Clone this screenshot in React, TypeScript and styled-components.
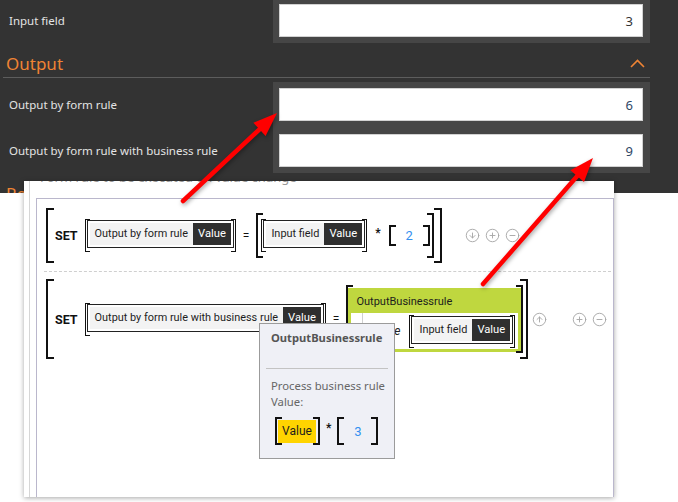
import React from 'react';
import styled, { createGlobalStyle, css } from 'styled-components';
import { CircleArrowDown, CircleArrowUp, CirclePlus, CircleMinus } from 'lucide-react';

const GlobalStyle = createGlobalStyle`
  * { box-sizing: border-box; }
  html, body { margin: 0; padding: 0; background: #ffffff; }
  body { font-family: "Noto Sans", "Open Sans", sans-serif; }
`;

const Page = styled.div`
  position: relative;
  width: 678px;
  height: 502px;
  overflow: hidden;
  background: #ffffff;
`;

/* ---------- dark form (background screenshot) ---------- */
const DarkForm = styled.div`
  width: 678px;
  height: 193px;
  overflow: hidden;
  background: #333333;
`;

const FieldGroup = styled.div`
  display: flex;
  width: 650px;
`;

const LabelColumn = styled.div<{ $top: number }>`
  width: 273px;
  display: flex;
  flex-direction: column;
  gap: 13px;
  padding-top: ${p => p.$top}px;
`;

const FieldLabel = styled.div`
  height: 33px;
  display: flex;
  align-items: center;
  padding-left: 9px;
  font-size: 11.5px;
  color: #e4e4e4;
  white-space: nowrap;
`;

const InputColumn = styled.div<{ $top: number }>`
  flex: 1;
  display: flex;
  flex-direction: column;
  gap: 13px;
  padding: ${p => p.$top}px 7px 6px 6px;
  background: #464646;
`;

const ValueInput = styled.div<{ $tone: string }>`
  height: 33px;
  display: flex;
  align-items: center;
  justify-content: flex-end;
  padding-right: 9px;
  background: #ffffff;
  border: 1px solid #d2d2d2;
  font-size: 13px;
  color: ${p => p.$tone};
`;

const SectionHeader = styled.div`
  width: 647px;
  height: 35px;
  margin: 0 0 4px 3px;
  padding: 6px 5px 0 3px;
  display: flex;
  align-items: center;
  justify-content: space-between;
  border-bottom: 1px solid #5d5d5d;
  color: #ef8434;
  font-size: 17px;
`;

/* ---------- rule editor panel ---------- */
const RulePanel = styled.div`
  position: absolute;
  left: 24px;
  top: 181px;
  width: 590px;
  height: 316px;
  display: flex;
  padding-left: 5px;
  background: #ffffff;
  overflow: hidden;
  box-shadow: 0 1px 5px rgba(0, 0, 0, 0.35);
  font-family: "Roboto", "Liberation Sans", sans-serif;
`;

const PanelInner = styled.div`
  flex: 1;
  display: flex;
  flex-direction: column;
  padding-left: 6px;
  border-left: 1px solid #d6d6d6;
`;

const PanelTitle = styled.div`
  height: 29px;
  margin-top: -12px;
  padding-left: 4px;
  font-family: "Noto Sans", sans-serif;
  font-size: 13px;
  line-height: 16px;
  color: #9a9a9a;
  white-space: nowrap;
`;

const RulesBox = styled.div`
  flex: 1;
  border: 1px solid #bab7cc;
  border-bottom: none;
  padding: 0 2px 0 7px;
`;

const RuleRow = styled.div<{ $last?: boolean }>`
  display: flex;
  align-items: center;
  padding: ${p => (p.$last ? '7px 0 0 2px' : '9px 0 8px 2px')};
  border-bottom: ${p => (p.$last ? 'none' : '1px dashed #cfcfcf')};
`;

const bracketLines = (stroke: number, tick: number) => css`
  position: relative;
  flex-shrink: 0;
  &::before,
  &::after {
    content: '';
    position: absolute;
    top: 0;
    bottom: 0;
    width: ${tick}px;
    border: ${stroke}px solid #111111;
  }
  &::before {
    left: 0;
    border-right: none;
  }
  &::after {
    right: 0;
    border-left: none;
  }
`;

const StatementBracket = styled.div<{ $pv: number; $pr: number }>`
  ${bracketLines(2, 6)}
  display: flex;
  align-items: center;
  gap: 7px;
  padding: ${p => `${p.$pv}px ${p.$pr}px ${p.$pv}px 9px`};
`;

const ExprBracket = styled.div`
  ${bracketLines(2, 5)}
  display: flex;
  align-items: center;
  gap: 8px;
  padding: 6px 4px 6px 5px;
`;

const NumberBracket = styled.div<{ $h: number }>`
  ${bracketLines(2, 5)}
  width: 41px;
  height: ${p => p.$h}px;
  display: flex;
  align-items: center;
  justify-content: center;
  font-size: 13px;
  color: #3490f0;
`;

const Keyword = styled.span`
  font-weight: 700;
  font-size: 12.5px;
  color: #111111;
`;

const Operator = styled.span`
  font-size: 12px;
  color: #111111;
`;

const Times = styled.span`
  font-size: 12px;
  font-weight: 700;
  color: #111111;
  margin-top: -6px;
`;

const RefBracket = styled.div`
  ${bracketLines(1, 4)}
  display: inline-flex;
  padding: 1px 2px 4px 2px;
`;

const RefBox = styled.div`
  display: flex;
  padding: 2px;
  border: 1px solid #222222;
  background: #ffffff;
`;

const RefName = styled.span`
  height: 22px;
  line-height: 22px;
  padding: 0 5px;
  background: #f3f3f3;
  color: #1e1e1e;
  font-size: 10.9px;
  white-space: nowrap;
`;

const RefValue = styled.span`
  height: 22px;
  line-height: 22px;
  padding: 0 5px;
  background: #2f2f2f;
  color: #ffffff;
  font-size: 11.2px;
`;

const BlockBracket = styled.div`
  ${bracketLines(2, 5)}
  display: flex;
  padding: 3px 2px 1px 2px;
`;

const RuleBlock = styled.div`
  width: 173px;
  display: flex;
  flex-direction: column;
  padding: 0 3px 3px 3px;
  background: #bfd73f;
`;

const BlockTitle = styled.div`
  height: 25px;
  padding: 6px 0 0 5px;
  font-size: 11px;
  line-height: 16px;
  color: #1d1d1d;
`;

const BlockBody = styled.div`
  height: 36px;
  display: flex;
  padding-left: 11px;
  background: #ffffff;
`;

const BlockGuide = styled.div`
  flex: 1;
  display: flex;
  align-items: center;
  gap: 8px;
  padding-left: 8px;
  border-left: 1px solid #d0d0d0;
`;

const ParamName = styled.span`
  width: 30px;
  font-style: italic;
  font-size: 12px;
  color: #222222;
`;

const RowTools = styled.div`
  display: flex;
  margin-left: 1px;
`;

const ToolSlot = styled.span<{ $hidden?: boolean }>`
  width: 20px;
  display: flex;
  justify-content: center;
  color: #a8a8a8;
  visibility: ${p => (p.$hidden ? 'hidden' : 'visible')};
`;

/* ---------- tooltip ---------- */
const Tooltip = styled.div`
  position: absolute;
  left: 259px;
  top: 323px;
  width: 136px;
  height: 136px;
  padding-top: 5px;
  background: #eff0f6;
  border: 1px solid #9b9b9b;
  font-family: "Noto Sans", sans-serif;
`;

const TipTitle = styled.div`
  height: 18px;
  line-height: 18px;
  padding-left: 11px;
  font-weight: 700;
  font-size: 11.2px;
  color: #555555;
  white-space: nowrap;
`;

const TipRule = styled.div`
  height: 1px;
  margin: 21px 6px 0;
  background: #c3c3c3;
`;

const TipText = styled.div`
  margin-top: 9px;
  padding-left: 11px;
  font-size: 11.3px;
  line-height: 16px;
  color: #666666;
  white-space: nowrap;
`;

const TipExpr = styled.div`
  display: flex;
  align-items: center;
  gap: 6px;
  height: 28px;
  margin-top: 7px;
  padding-left: 15px;
  font-family: "Roboto", "Liberation Sans", sans-serif;
`;

const ValueBracket = styled.div`
  ${bracketLines(2, 5)}
  height: 28px;
  display: flex;
  align-items: center;
  padding: 0 4px 0 3px;
`;

const YellowValue = styled.span`
  width: 38px;
  height: 23px;
  display: flex;
  align-items: center;
  justify-content: center;
  background: #ffd400;
  color: #1d1d1d;
  font-size: 12px;
`;

/* ---------- arrows ---------- */
const ArrowLayer = styled.svg`
  position: absolute;
  left: 0;
  top: 0;
  width: 678px;
  height: 502px;
  pointer-events: none;
  filter: drop-shadow(1px 2px 2px rgba(0, 0, 0, 0.35));
`;

const Chevron = () => (
  <svg width="15" height="9" viewBox="0 0 15 9">
    <path d="M1 8 L7.5 1.5 L14 8" fill="none" stroke="#ef8434" strokeWidth="1.6" />
  </svg>
);

const FieldRef = ({ name }: { name: string }) => (
  <RefBracket>
    <RefBox>
      <RefName>{name}</RefName>
      <RefValue>Value</RefValue>
    </RefBox>
  </RefBracket>
);

const Tools = ({ up, down }: { up: boolean; down: boolean }) => (
  <RowTools>
    <ToolSlot $hidden={!up}>
      <CircleArrowUp size={15} strokeWidth={1.5} />
    </ToolSlot>
    <ToolSlot $hidden={!down}>
      <CircleArrowDown size={15} strokeWidth={1.5} />
    </ToolSlot>
    <ToolSlot>
      <CirclePlus size={15} strokeWidth={1.5} />
    </ToolSlot>
    <ToolSlot>
      <CircleMinus size={15} strokeWidth={1.5} />
    </ToolSlot>
  </RowTools>
);

export default function App() {
  return (
    <Page>
      <GlobalStyle />
      <DarkForm>
        <FieldGroup>
          <LabelColumn $top={4}>
            <FieldLabel>Input field</FieldLabel>
          </LabelColumn>
          <InputColumn $top={4}>
            <ValueInput $tone="#333333">3</ValueInput>
          </InputColumn>
        </FieldGroup>
        <SectionHeader>
          <span>Output</span>
          <Chevron />
        </SectionHeader>
        <FieldGroup>
          <LabelColumn $top={6}>
            <FieldLabel>Output by form rule</FieldLabel>
            <FieldLabel>Output by form rule with business rule</FieldLabel>
          </LabelColumn>
          <InputColumn $top={6}>
            <ValueInput $tone="#2f4766">6</ValueInput>
            <ValueInput $tone="#2f4766">9</ValueInput>
          </InputColumn>
        </FieldGroup>
        <SectionHeader>
          <span>Roles</span>
        </SectionHeader>
      </DarkForm>

      <RulePanel>
        <PanelInner>
          <PanelTitle>Form rule to be executed on value change</PanelTitle>
          <RulesBox>
            <RuleRow>
              <StatementBracket $pv={5} $pr={8}>
                <Keyword>SET</Keyword>
                <FieldRef name="Output by form rule" />
                <Operator>=</Operator>
                <ExprBracket>
                  <FieldRef name="Input field" />
                  <Times>*</Times>
                  <NumberBracket $h={21}>2</NumberBracket>
                </ExprBracket>
              </StatementBracket>
              <Tools up={false} down={true} />
            </RuleRow>
            <RuleRow $last>
              <StatementBracket $pv={6} $pr={5}>
                <Keyword>SET</Keyword>
                <FieldRef name="Output by form rule with business rule" />
                <Operator>=</Operator>
                <BlockBracket>
                  <RuleBlock>
                    <BlockTitle>OutputBusinessrule</BlockTitle>
                    <BlockBody>
                      <BlockGuide>
                        <ParamName>Value</ParamName>
                        <FieldRef name="Input field" />
                      </BlockGuide>
                    </BlockBody>
                  </RuleBlock>
                </BlockBracket>
              </StatementBracket>
              <Tools up={true} down={false} />
            </RuleRow>
          </RulesBox>
        </PanelInner>
      </RulePanel>

      <Tooltip>
        <TipTitle>OutputBusinessrule</TipTitle>
        <TipRule />
        <TipText>
          Process business rule
          <br />
          Value:
        </TipText>
        <TipExpr>
          <ValueBracket>
            <YellowValue>Value</YellowValue>
          </ValueBracket>
          <Times>*</Times>
          <NumberBracket $h={28}>3</NumberBracket>
        </TipExpr>
      </Tooltip>

      <ArrowLayer viewBox="0 0 678 502">
        <line x1="183" y1="201" x2="262" y2="127" stroke="#ff0000" strokeWidth="4.5" strokeLinecap="round" />
        <polygon points="277,113 265.6,136 253.4,122.8" fill="#ff0000" />
        <line x1="483" y1="284" x2="579" y2="174" stroke="#ff0000" strokeWidth="4.5" strokeLinecap="round" />
        <polygon points="593,158 584,182 570.4,170.2" fill="#ff0000" />
      </ArrowLayer>
    </Page>
  );
}
